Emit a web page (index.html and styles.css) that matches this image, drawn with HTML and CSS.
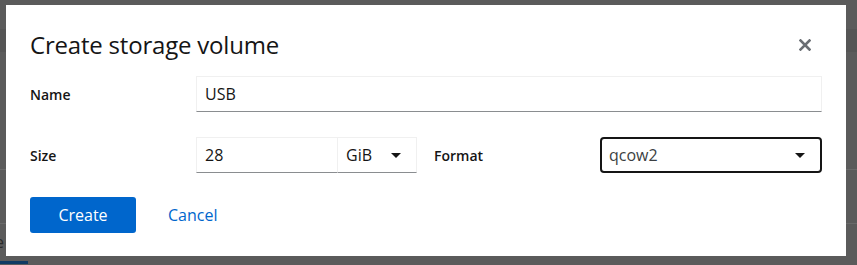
FILE: index.html
```html
<!DOCTYPE html>
<html lang="en">
<head>
  <meta charset="UTF-8">
  <title>Create storage volume</title>
  <link rel="stylesheet" href="styles.css">
</head>
<body>

<!-- PAGE BEHIND THE BACKDROP -->
<div class="page">
  <div class="page-top"></div>
  <div class="page-toolbar"></div>
  <div class="page-row first"></div>
  <div class="page-row"></div>
  <div class="page-row last"><span class="page-text">e</span></div>
  <div class="page-tab"></div>
</div>

<!-- MODAL -->
<div class="modal">
  <div class="modal-header">
    <h1>Create storage volume</h1>
    <button class="close-btn" aria-label="Close">
      <svg width="12" height="12" viewBox="0 0 12 12">
        <path d="M1.5 1.5 L10.5 10.5 M10.5 1.5 L1.5 10.5" stroke="#6a6e73" stroke-width="2.6" stroke-linecap="square"/>
      </svg>
    </button>
  </div>

  <div class="form">
    <label class="label">Name</label>
    <div class="field wide">
      <input class="input" type="text" value="USB">
    </div>

    <label class="label">Size</label>
    <div class="field size-group">
      <input class="input" type="text" value="28">
      <div class="select unit">
        <span>GiB</span>
        <span class="caret"></span>
      </div>
    </div>

    <label class="label">Format</label>
    <div class="field">
      <div class="select format">
        <span>qcow2</span>
        <span class="caret"></span>
      </div>
    </div>
  </div>

  <div class="footer">
    <button class="btn-primary">Create</button>
    <button class="btn-link">Cancel</button>
  </div>
</div>

</body>
</html>
```

FILE: styles.css
```css
body {
  margin: 0;
  font-family: "Open Sans", "Liberation Sans", sans-serif;
  background-color: #5b5b5b;
  color: #151515;
  width: 857px;
  height: 265px;
  overflow: hidden;
}

/* page behind the backdrop */
.page {
  height: 265px;
  display: flex;
  flex-direction: column;
}

.page-top {
  height: 29px;
}

.page-toolbar {
  height: 23px;
  background-color: #555;
}

.page-row {
  height: 53px;
  border-bottom: 1px solid #6a6a6a;
  position: relative;
}

.page-row.first {
  height: 117px;
}

.page-row.last {
  height: 34px;
  border-bottom: none;
}

.page-text {
  position: absolute;
  left: -5px;
  top: 7px;
  font-size: 16px;
  color: #2a2a2a;
}

.page-tab {
  margin-top: auto;
  width: 28px;
  height: 3px;
  margin-bottom: 1px;
  background-color: #0f3a63;
}

/* modal */
.modal {
  position: absolute;
  left: 6px;
  top: 5px;
  width: 840px;
  height: 251px;
  box-sizing: border-box;
  padding: 24px;
  background: white;
}

.modal-header {
  display: flex;
  justify-content: space-between;
  align-items: center;
  height: 31px;
  margin-bottom: 16px;
}

.modal-header h1 {
  margin: 0;
  font-size: 24px;
  font-weight: 400;
  line-height: 31px;
  letter-spacing: -0.2px;
}

.close-btn {
  background: none;
  border: none;
  padding: 0;
  margin-right: 11px;
  margin-top: 1px;
  display: flex;
  cursor: pointer;
}

.form {
  display: grid;
  grid-template-columns: 149px 221px 149px 1fr;
  column-gap: 17px;
  row-gap: 25px;
  align-items: center;
}

.label {
  font-size: 14px;
  font-weight: 600;
}

.field.wide {
  grid-column: 2 / 5;
}

.input {
  box-sizing: border-box;
  width: 100%;
  height: 36px;
  padding: 0 8px;
  border: 1px solid #f0f0f0;
  border-bottom-color: #8a8d90;
  font-family: inherit;
  font-size: 16px;
  color: #151515;
  outline: none;
}

.size-group {
  display: flex;
}

.size-group .input {
  flex: 1;
}

.select {
  box-sizing: border-box;
  height: 36px;
  display: flex;
  align-items: center;
  justify-content: space-between;
  font-size: 16px;
  cursor: pointer;
}

.select.unit {
  width: 79px;
  padding: 0 15px 0 8px;
  border: 1px solid #f0f0f0;
  border-left: none;
  border-bottom-color: #8a8d90;
}

.select.format {
  width: 100%;
  padding: 0 15px 0 7px;
  border: 2px solid #151515;
  border-radius: 4px;
  color: #3c3f42;
}

.caret {
  width: 0;
  height: 0;
  border-left: 5px solid transparent;
  border-right: 5px solid transparent;
  border-top: 5px solid #151515;
}

.footer {
  display: flex;
  align-items: center;
  gap: 16px;
  margin-top: 24px;
}

.btn-primary {
  height: 36px;
  width: 106px;
  background-color: #0066cc;
  color: white;
  border: none;
  border-radius: 3px;
  font-family: inherit;
  font-size: 16px;
  cursor: pointer;
}

.btn-link {
  background: none;
  border: none;
  padding: 0 16px;
  color: #0066cc;
  font-family: inherit;
  font-size: 16px;
  cursor: pointer;
}
```
